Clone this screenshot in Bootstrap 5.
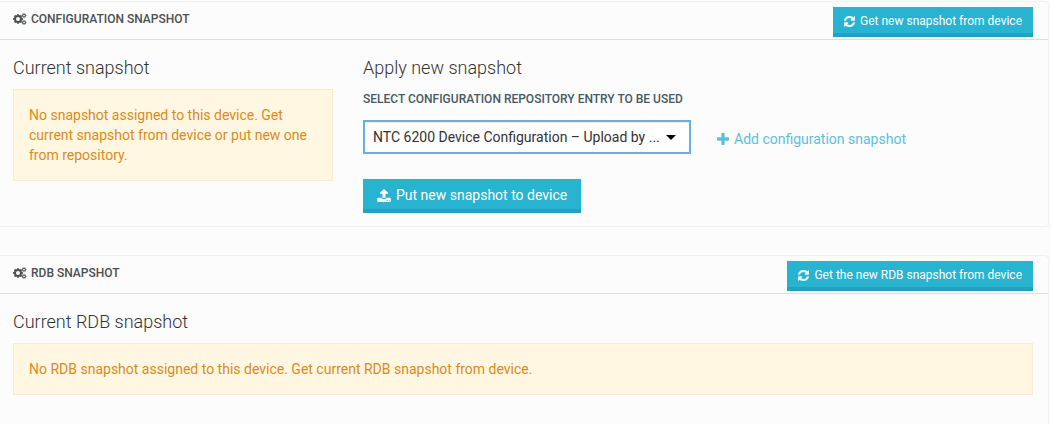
<!DOCTYPE html>
<html lang="en">
<head>
<meta charset="utf-8">
<meta name="viewport" content="width=device-width, initial-scale=1">
<title>Device snapshots</title>
<link rel="stylesheet" href="https://cdn.jsdelivr.net/npm/bootstrap@5.3.0/dist/css/bootstrap.min.css">
<style>
  body { background: #fcfcfc; color: #333; font-family: Roboto, "Liberation Sans", sans-serif; font-size: 14px; line-height: 20px; }
  .page { padding: 1px 2px 0 0; gap: 28px; }
  .panel { border: 1px solid #f0f0f0; border-left: 0; border-radius: 0 4px 4px 0; }
  .panel-last { border-bottom: 0; border-bottom-right-radius: 0; }
  .panel-top { min-height: 38px; padding: 5px 15px 2px 13px; border-bottom: 1px solid #dcdede; }
  .panel-main { padding: 16px 15px 13px 13px; }
  .panel-title { font-size: 12px; line-height: 20px; font-weight: 500; color: #4d4f50; gap: 4px; padding-bottom: 6px; }
  .section-title { font-size: 18px; line-height: 24px; font-weight: 300; margin-bottom: 9px; }
  .field-label { font-size: 12px; line-height: 20px; font-weight: 500; color: #455a64; margin-bottom: 11px; }
  .btn-snap { --bs-btn-color: #fff; --bs-btn-bg: #28b3d0; --bs-btn-border-color: #28b3d0; --bs-btn-hover-color: #fff; --bs-btn-hover-bg: #24a6c2; --bs-btn-hover-border-color: #24a6c2; --bs-btn-border-radius: 0; --bs-btn-font-size: 14px; --bs-btn-padding-x: 14px; --bs-btn-padding-y: 6px; line-height: 20px; gap: 5px; border: 0; box-shadow: inset 0 -4px #24a2bd; padding-bottom: 8px; }
  .btn-top { --bs-btn-font-size: 12px; --bs-btn-padding-x: 11px; --bs-btn-padding-y: 4px; padding-bottom: 6px; }
  .notice { --bs-alert-bg: #fff7e2; --bs-alert-color: #dc8a1e; --bs-alert-border-color: #fbeacb; --bs-alert-padding-x: 15px; --bs-alert-padding-y: 15px; --bs-alert-border-radius: 0; --bs-alert-margin-bottom: 30px; }
  .repo-select { width: 328px; height: 34px; padding: 4px 30px 4px 8px; font-size: 14px; line-height: 20px; color: #333; background: #fff; border: 2px solid #66afe9; border-radius: 0; box-shadow: inset 0 1px 1px #00000013; }
  .repo-select:focus { border-color: #66afe9; box-shadow: none; }
  .repo-row { margin-bottom: 25px; gap: 26px; }
  .caret { right: 15px; top: 15px; width: 10px; height: 5px; pointer-events: none; }
  .add-link { color: #5bc0de; gap: 5px; padding-top: 4px; }
  .gutter { --bs-gutter-x: 30px; }
  svg { flex: none; fill: currentColor; }
</style>
</head>
<body>
<svg class="d-none" aria-hidden="true">
  <symbol id="cogs" viewBox="0 0 14 12">
    <g fill="none" stroke="currentColor">
      <circle cx="5" cy="6" r="3" stroke-width="2"/>
      <circle cx="5" cy="6" r="4.300" stroke-width="1.300" pathLength="16" stroke-dasharray="1 1" stroke-dashoffset=".5"/>
      <circle cx="11" cy="2.600" r="1.400" stroke-width="1.100"/>
      <circle cx="11" cy="2.600" r="2.200" stroke-width=".7" pathLength="12" stroke-dasharray="1 1" stroke-dashoffset=".5"/>
      <circle cx="11" cy="9.400" r="1.400" stroke-width="1.100"/>
      <circle cx="11" cy="9.400" r="2.200" stroke-width=".7" pathLength="12" stroke-dasharray="1 1" stroke-dashoffset=".5"/>
    </g>
  </symbol>
  <symbol id="refresh" viewBox="128 128 1536 1536"><path d="M1639 1056q0 5-1 7-64 268-268 434.500t-478 166.500q-146 0-282.500-55t-243.500-157l-129 129q-19 19-45 19t-45-19-19-45v-448q0-26 19-45t45-19h448q26 0 45 19t19 45-19 45l-137 137q71 66 161 102t187 36q134 0 250-65t186-179q11-17 53-117 8-23 30-23h192q13 0 22.500 9.500t9.500 22.500zm25-800v448q0 26-19 45t-45 19h-448q-26 0-45-19t-19-45 19-45l138-138q-148-137-349-137-134 0-250 65t-186 179q-11 17-53 117-8 23-30 23h-199q-13 0-22.500-9.500t-9.500-22.500v-7q65-268 270-434.500t480-166.500q146 0 284 55.500t245 156.500l130-129q19-19 45-19t45 19 19 45z" stroke="currentColor" stroke-width="50"/></symbol>
  <symbol id="upload" viewBox="64 64 1664 1600"><path d="M1344 1472q0-26-19-45t-45-19-45 19-19 45 19 45 45 19 45-19 19-45zm256 0q0-26-19-45t-45-19-45 19-19 45 19 45 45 19 45-19 19-45zm128-224v320q0 40-28 68t-68 28h-1472q-40 0-68-28t-28-68v-320q0-40 28-68t68-28h427q21 56 70.500 92t110.500 36h256q61 0 110.500-36t70.500-92h427q40 0 68 28t28 68zm-325-648q-17 40-59 40h-256v448q0 26-19 45t-45 19h-256q-26 0-45-19t-19-45v-448h-256q-42 0-59-40-17-39 14-69l448-448q18-19 45-19t45 19l448 448q31 30 14 69z"/></symbol>
  <symbol id="plus" viewBox="0 0 11 11"><path d="M4.700 0h1.600q.7 0 .7.700V4h3.300q.7 0 .7.700v1.600q0 .7-.7.700H7v3.300q0 .7-.7.700H4.700q-.7 0-.7-.7V7H.7Q0 7 0 6.300V4.700Q0 4 .7 4H4V.7Q4 0 4.700 0z"/></symbol>
</svg>

<main class="page d-flex flex-column min-vh-100">
  <section class="panel">
    <header class="panel-top d-flex justify-content-between align-items-center">
      <h2 class="panel-title d-flex align-items-center text-uppercase mb-0"><svg width="14" height="12"><use href="#cogs"/></svg>Configuration snapshot</h2>
      <button type="button" class="btn btn-snap btn-top d-inline-flex align-items-center"><svg width="11" height="11"><use href="#refresh"/></svg>Get new snapshot from device</button>
    </header>
    <div class="panel-main">
      <div class="row gutter">
        <div class="col-4">
          <h3 class="section-title">Current snapshot</h3>
          <div class="alert notice">No snapshot assigned to this device. Get current snapshot from device or put new one from repository.</div>
        </div>
        <div class="col-8">
          <h3 class="section-title">Apply new snapshot</h3>
          <label class="field-label d-block text-uppercase" for="repo">Select configuration repository entry to be used</label>
          <div class="repo-row d-flex align-items-center">
            <div class="position-relative">
              <select id="repo" class="repo-select form-control"><option>NTC 6200 Device Configuration – Upload by ...</option></select>
              <svg class="caret position-absolute" viewBox="0 0 10 5" aria-hidden="true"><path d="M0 0h10L5 5z" fill="#000"/></svg>
            </div>
            <a href="#" class="add-link d-inline-flex align-items-center text-decoration-none"><svg width="12" height="12"><use href="#plus"/></svg>Add configuration snapshot</a>
          </div>
          <button type="button" class="btn btn-snap d-inline-flex align-items-center"><svg width="14" height="13"><use href="#upload"/></svg>Put new snapshot to device</button>
        </div>
      </div>
    </div>
  </section>

  <section class="panel panel-last flex-grow-1">
    <header class="panel-top d-flex justify-content-between align-items-center">
      <h2 class="panel-title d-flex align-items-center text-uppercase mb-0"><svg width="14" height="12"><use href="#cogs"/></svg>RDB snapshot</h2>
      <button type="button" class="btn btn-snap btn-top d-inline-flex align-items-center"><svg width="11" height="11"><use href="#refresh"/></svg>Get the new RDB snapshot from device</button>
    </header>
    <div class="panel-main pb-0">
      <h3 class="section-title">Current RDB snapshot</h3>
      <div class="alert notice mb-0">No RDB snapshot assigned to this device. Get current RDB snapshot from device.</div>
    </div>
  </section>
</main>
<script src="https://cdn.jsdelivr.net/npm/bootstrap@5.3.0/dist/js/bootstrap.bundle.min.js"></script>
</body>
</html>
